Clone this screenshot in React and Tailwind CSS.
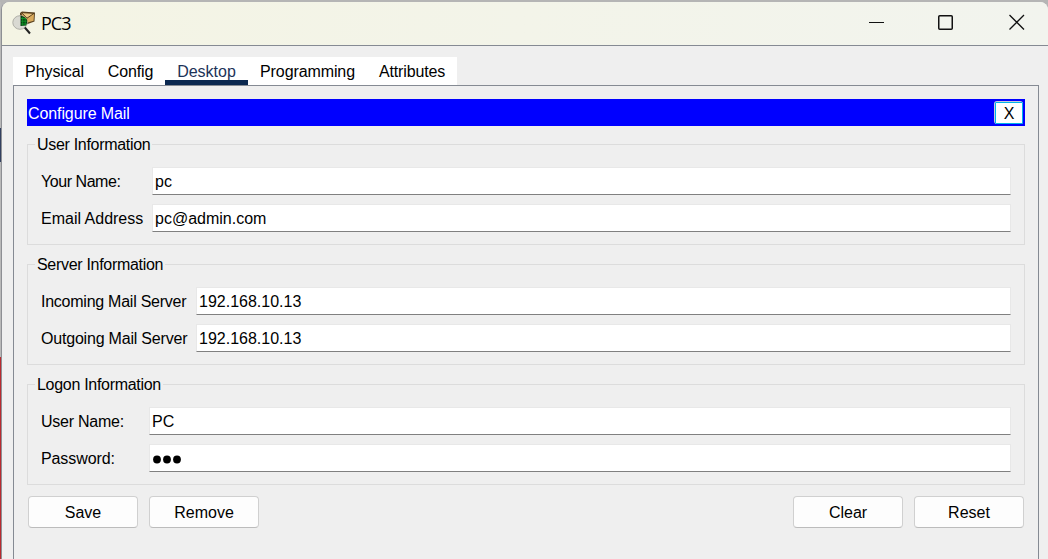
import React from "react";

const tabs = [
  { name: "Physical", box: "w-[83px] tracking-[-0.1px]" },
  { name: "Config", box: "w-[69px] tracking-[-0.1px]" },
  { name: "Desktop", box: "w-[83px]", active: true },
  { name: "Programming", box: "w-[119px] tracking-[-0.1px]" },
  { name: "Attributes", box: "w-[90px] tracking-[-0.15px]" },
];

function AppIcon() {
  return (
    <svg className="mb-px" width="24" height="24" viewBox="0 0 24 24">
      <path d="M8 2 L10 0.5 L23 1.5 L22.5 10.5 L13 14 L8 13 Z" fill="#5a4220" />
      <path d="M9.5 2 L22 2.5 L21.6 9.8 L12 12.6 Z" fill="#d9aa5c" />
      <path d="M9.5 1.6 L15 7.2 L22 2.4 Z" fill="#ecc884" stroke="#4a3416" strokeWidth="0.9" />
      <ellipse cx="8" cy="11.5" rx="7.2" ry="6.8" fill="#d9d9d2" stroke="#aeaea6" strokeWidth="1" />
      <path d="M8.5 4.8 Q13.5 5.5 15.2 9 Q15.6 12 14 14.5 L8.5 15 Z" fill="#063d10" />
      <path d="M9 7.5h5M9 10.2h5.8M9 13h5.5M10.7 6v8.7M13.2 7v7.5" stroke="#10a82a" strokeWidth="0.7" />
      <path d="M12.8 16.5 L18 22.5" stroke="#222" strokeWidth="2" />
    </svg>
  );
}

function TitleBar() {
  return (
    <header className="flex h-11 shrink-0 items-center border-b border-[#858a93] bg-linear-to-r from-[#f4f4e4] to-[#f2f4ee] pl-[10px] pr-[23px]">
      <AppIcon />
      <span className="mb-[2px] ml-[5px] font-['Open_Sans',sans-serif] text-[18px] tracking-[-1px] text-black">PC3</span>
      <svg className="mb-[3px] ml-auto" width="156" height="16" viewBox="0 0 156 16" fill="none" stroke="#111">
        <path d="M0 8.5h15" />
        <rect x="69.75" y="1.75" width="13.5" height="13.5" rx="1" strokeWidth="1.5" />
        <path d="M140.5 1l14.5 14.5M155 1L140.5 15.5" strokeWidth="1.3" />
      </svg>
    </header>
  );
}

function Field({ label, value, labelBox, password }) {
  return (
    <div className="flex h-7 items-center">
      <label className={`${labelBox} shrink-0 whitespace-nowrap pt-px leading-[27px]`}>{label}</label>
      <div className="flex h-7 flex-1 items-center border border-[#e8e8e8] border-b-[#808080] bg-white pl-[2px] pt-px">
        {password ? (
          <svg width="30" height="10" viewBox="0 0 30 10">
            <circle cx="5" cy="5.5" r="3.9" />
            <circle cx="15" cy="5.5" r="3.9" />
            <circle cx="25" cy="5.5" r="3.9" />
          </svg>
        ) : (
          <span className="whitespace-nowrap">{value}</span>
        )}
      </div>
    </div>
  );
}

function Group({ title, children }) {
  return (
    <section className="mb-[10px] flex h-[110px] flex-col">
      <div className="flex h-[19px] items-center">
        <div className="h-px w-2 bg-[#dcdcdc]" />
        <h2 className="px-[2px] leading-[19px] tracking-[-0.3px]">{title}</h2>
        <div className="h-px flex-1 bg-[#dcdcdc]" />
      </div>
      <div className="-mt-[9px] flex flex-1 flex-col gap-[9px] border border-t-0 border-[#dcdcdc] pl-[13px] pr-[13px] pt-[22px]">
        {children}
      </div>
    </section>
  );
}

function Button({ children }) {
  return (
    <button className="h-8 w-[110px] rounded-[4px] border border-[#d0d0d0] border-b-[#bcbcbc] bg-[#fdfdfd] pt-[2px]">
      {children}
    </button>
  );
}

export default function App() {
  return (
    <div className="flex h-[559px] w-[1048px] overflow-hidden bg-[#b5b5b5] pt-[2px] font-['Liberation_Sans',Arial,sans-serif] text-[16px] leading-5 text-black">
      <div className="flex w-px shrink-0 flex-col">
        <div className="h-[126px] bg-[#b9b9b9]" />
        <div className="h-[34px] bg-[#334060]" />
        <div className="h-[195px] bg-[#b9b9b9]" />
        <div className="flex-1 bg-[#b82a2f]" />
      </div>
      <div className="flex flex-1 flex-col overflow-hidden rounded-t-[8px] border-l border-[#8d8f94] bg-[#efefef]">
        <TitleBar />
        <main className="flex flex-1 flex-col pl-[11px] pr-[9px] pt-[11px]">
          <nav className="flex h-7 w-[444px] shrink-0 bg-white">
            {tabs.map((t) => (
              <div
                key={t.name}
                className={`${t.box} flex h-7 items-center justify-center border-b-[5px] pt-[6px] ${
                  t.active ? "border-b-[#0b2850] text-[#1c3358]" : "border-b-transparent"
                }`}
              >
                {t.name}
              </div>
            ))}
          </nav>
          <div className="flex flex-1 flex-col border border-b-0 border-[#858a93] px-[13px] pt-[13px]">
            <div className="mb-[9px] flex h-[27px] shrink-0 items-center bg-[#0000ff] pl-px pr-[2px] text-white">
              <span className="pt-[2px] tracking-[-0.1px]">Configure Mail</span>
              <div className="ml-auto rounded-[3px] bg-[#c8c8d8] pl-px pt-px">
                <button className="block h-[22px] w-7 rounded-[1px] border border-[#00b4e8] bg-white pt-px text-black">X</button>
              </div>
            </div>
            <Group title="User Information">
              <Field label="Your Name:" value="pc" labelBox="w-[111px] tracking-[-0.45px]" />
              <Field label="Email Address" value="pc@admin.com" labelBox="w-[111px]" />
            </Group>
            <Group title="Server Information">
              <Field label="Incoming Mail Server" value="192.168.10.13" labelBox="w-[155px] tracking-[-0.25px]" />
              <Field label="Outgoing Mail Server" value="192.168.10.13" labelBox="w-[155px] tracking-[-0.2px]" />
            </Group>
            <Group title="Logon Information">
              <Field label="User Name:" value="PC" labelBox="w-[108px] tracking-[-0.25px]" />
              <Field label="Password:" labelBox="w-[108px] tracking-[-0.1px]" password />
            </Group>
            <div className="flex gap-[11px] px-px pt-px">
              <Button>Save</Button>
              <Button>Remove</Button>
              <div className="flex-1" />
              <Button>Clear</Button>
              <Button>Reset</Button>
            </div>
          </div>
        </main>
      </div>
    </div>
  );
}
